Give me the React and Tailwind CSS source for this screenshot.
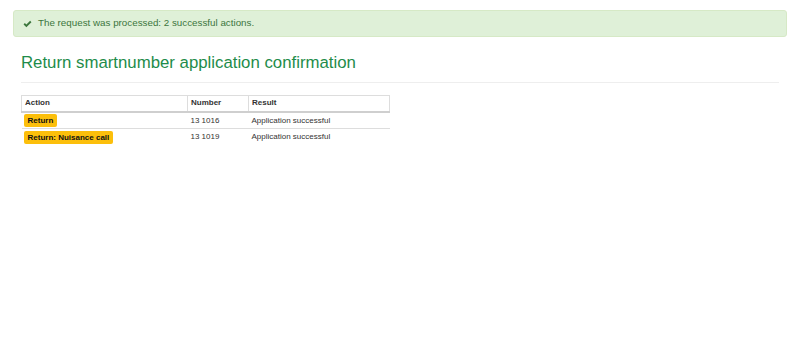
import React from 'react';

// Success notice at the top of the page
const Alert = ({ children }) => (
  <div className="h-[27px] flex items-center gap-[6px] pl-[9px] bg-[#dff0d8] border border-[#d6e9c6] rounded-[3px] text-[#3c763d] text-[9.8px]">
    <svg width="9" height="8" viewBox="0 0 16 13" className="shrink-0">
      <path d="M1 7.2 L3.3 4.9 L6 7.6 L12.7 0.9 L15 3.2 L6 12.2 Z" fill="#3c763d" />
    </svg>
    <span>{children}</span>
  </div>
);

const Label = ({ children }) => (
  <span className="inline-block bg-[#fcbf0b] rounded-[2px] px-[4px] h-[13px] leading-[13px] font-bold text-[8px] text-[#111]">
    {children}
  </span>
);

const rows = [
  { action: 'Return', number: '13 1016', result: 'Application successful' },
  { action: 'Return: Nuisance call', number: '13 1019', result: 'Application successful' },
];

export default function App() {
  return (
    <div className="w-[800px] h-[355px] bg-white pt-[10px] px-[13px]" style={{ fontFamily: '"Liberation Sans", Arial, sans-serif' }}>
      <Alert>The request was processed: 2 successful actions.</Alert>

      <div className="px-[8px]">
        <h3 className="mt-[17px] text-[16.8px] leading-[18.5px] text-[#1e8c4a]">
          Return smartnumber application confirmation
        </h3>
        <div className="mt-[9px] h-px bg-[#eeeeee]" />

        <table className="mt-[12px] w-[369px] border-collapse text-[8px] text-[#333]">
          <thead>
            <tr className="h-[17px]">
              <th className="w-[166px] text-left font-bold px-[3px] border border-[#dddddd] border-b-2 border-b-[#cfcfcf]">Action</th>
              <th className="w-[61px] text-left font-bold px-[3px] border border-[#dddddd] border-b-2 border-b-[#cfcfcf]">Number</th>
              <th className="text-left font-bold px-[3px] border border-[#dddddd] border-b-2 border-b-[#cfcfcf]">Result</th>
            </tr>
          </thead>
          <tbody>
            {rows.map((r, i) => (
              <tr key={i} className={`h-[16.5px] ${i > 0 ? 'border-t border-[#dddddd]' : ''}`}>
                <td className="pl-[2px] py-[1px]"><Label>{r.action}</Label></td>
                <td className="px-[3px]">{r.number}</td>
                <td className="px-[3px]">{r.result}</td>
              </tr>
            ))}
          </tbody>
        </table>
      </div>
    </div>
  );
}
